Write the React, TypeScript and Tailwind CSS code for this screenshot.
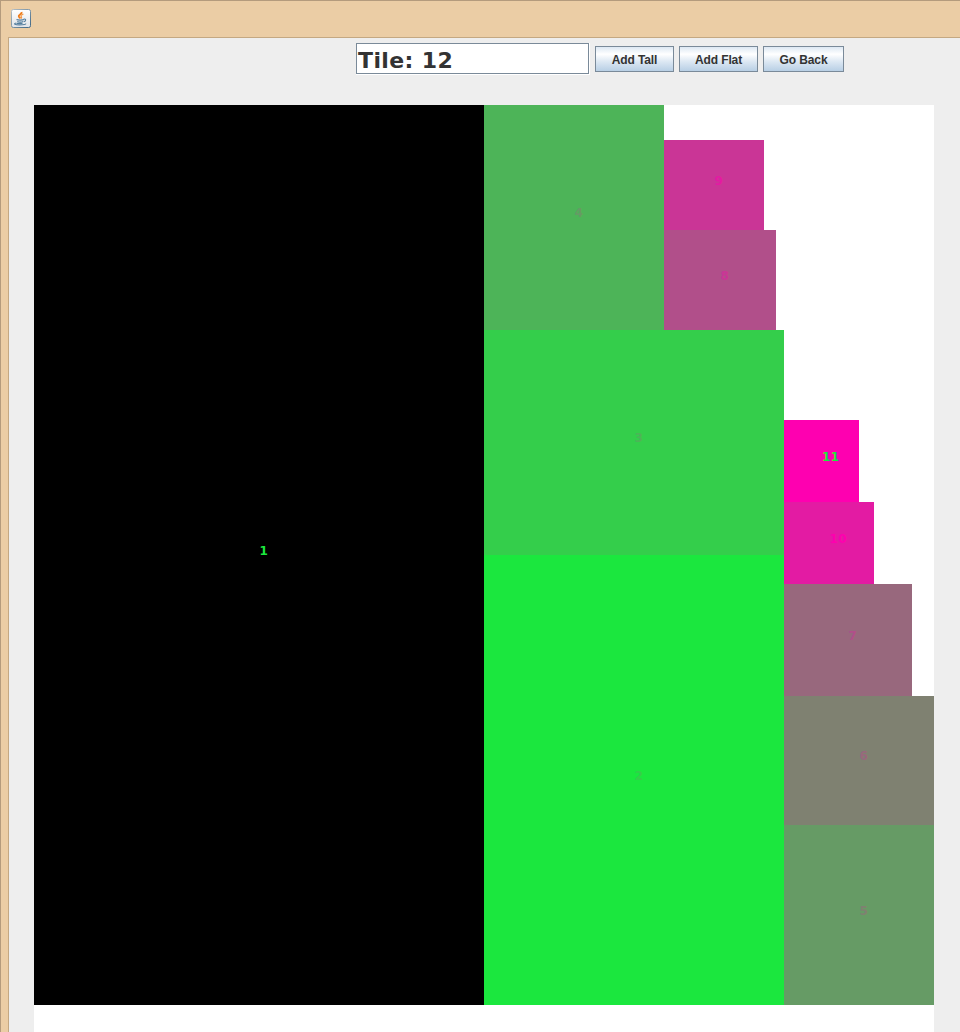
import type { ReactNode } from "react";

type TileProps = { label: string; className: string };

// A tile's label starts at its centre, with the baseline on the middle line.
function Tile({ label, className }: TileProps) {
  return (
    <div className={`shrink-0 ${className}`}>
      <div className="flex h-1/2 items-end pl-[50%]">
        <span className="-mb-[1.5px] ml-[0.5px] text-[12px] leading-[12px] font-bold tracking-[0.3px]">{label}</span>
      </div>
    </div>
  );
}

function Button({ children, className }: { children: ReactNode; className: string }) {
  return (
    <button
      className={`h-[26px] border border-[#7a8a99] bg-[linear-gradient(to_bottom,#dde8f3_0%,#ffffff_30%,#dde8f3_60%,#b8cfe5_100%)] p-0 text-center font-['Liberation_Sans',sans-serif] text-[12px] leading-[26px] font-bold tracking-[-0.1px] text-[#333333] ${className}`}
    >
      {children}
    </button>
  );
}

function JavaIcon() {
  return (
    <svg className="block" width="20" height="19" viewBox="0 0 20 19" fill="none">
      <defs>
        <linearGradient id="plate" x1="0" y1="0" x2="0" y2="1">
          <stop offset="0" stopColor="#ffffff" />
          <stop offset="1" stopColor="#dfe3e8" />
        </linearGradient>
        <linearGradient id="rim" x1="0" y1="0" x2="1" y2="1">
          <stop offset="0" stopColor="#b4bfc6" />
          <stop offset="1" stopColor="#3f6684" />
        </linearGradient>
      </defs>
      <rect x="0.5" y="0.5" width="19" height="18" rx="1.8" fill="url(#plate)" stroke="url(#rim)" />
      <path d="M10.6 3C11.4 5.2 7 5.7 7.8 7.5C8.2 8.5 9 8.8 9.3 9.4" stroke="#ef7d1c" strokeWidth="1.9" />
      <path d="M12.4 5.2C9.5 6 9.7 7.1 10.5 8C11 8.7 10.2 9.3 9.8 9.7" stroke="#f39a4a" strokeWidth="1.2" />
      <path d="M5.5 10.5C7 11.3 11.5 11.2 13 10.5M6.3 12.5C7.8 13.1 11 13.1 12.3 12.5" stroke="#557f9f" strokeWidth="1.2" />
      <path d="M12.7 10.1C15.4 9.5 15.2 12 12.8 12.8" stroke="#557f9f" strokeWidth="1.1" />
      <path d="M5.2 14C1.8 15 4.2 15.9 8.5 15.9C12.8 15.9 15.2 15.3 14.6 14.5M5.6 14.4H11.5" stroke="#557f9f" strokeWidth="1.1" />
    </svg>
  );
}

export default function App() {
  return (
    <div className="h-[1032px] w-[960px] overflow-hidden border-t border-l border-[#b49b7d] bg-[#ebcda5] font-['DejaVu_Sans',Verdana,sans-serif]">
      <header className="h-9 pt-2 pl-[10px]">
        <JavaIcon />
      </header>
      <main className="ml-[7px] h-[995px] border-t border-l border-[#c4a882] bg-[#eeeeee]">
        <div className="flex h-[67px] items-start gap-[5px] pt-[5px] pl-[347px]">
          <div className="flex h-8 w-[234px] border-r border-b border-white">
            <div className="flex-1 border border-[#7a8a99] bg-white pl-[1px] text-[22px] leading-[33px] font-bold tracking-[0.4px] whitespace-pre text-[#333333]">
              Tile: 12
            </div>
          </div>
          <div className="flex gap-[5px] pt-[3px]">
            <Button className="w-[79px]">Add Tall</Button>
            <Button className="w-[79px]">Add Flat</Button>
            <Button className="w-[81px]">Go Back</Button>
          </div>
        </div>
        <div className="ml-[25px] flex h-[927px] w-[900px] items-start bg-white">
          <Tile label="1" className="h-[900px] w-[450px] bg-black text-[#1be73e]" />
          <div className="w-[300px]">
            <div className="flex h-[225px] items-end">
              <Tile label="4" className="h-[225px] w-[180px] bg-[#4db458] text-[#669b65]" />
              <div>
                <Tile label="9" className="h-[90px] w-[100px] bg-[#ca3596] text-[#e31ba3]" />
                <Tile label="8" className="h-[100px] w-[112px] bg-[#b14f8a] text-[#ca3596]" />
              </div>
            </div>
            <Tile label="3" className="h-[225px] w-[300px] bg-[#34ce4b] text-[#4db458]" />
            <Tile label="2" className="h-[450px] w-[300px] bg-[#1be73e] text-[#34ce4b]" />
          </div>
          <div className="flex h-[900px] w-[150px] flex-col justify-end">
            <Tile label="11" className="h-[82px] w-[75px] bg-[#fe00b0] text-[#1be73e]" />
            <Tile label="10" className="h-[82px] w-[90px] bg-[#e31ba3] text-[#fe00b0]" />
            <Tile label="7" className="h-[112px] w-[128px] bg-[#98687d] text-[#b14f8a]" />
            <Tile label="6" className="h-[129px] w-[150px] bg-[#7f8171] text-[#98687d]" />
            <Tile label="5" className="h-[180px] w-[150px] bg-[#669b65] text-[#7f8171]" />
          </div>
        </div>
      </main>
    </div>
  );
}
